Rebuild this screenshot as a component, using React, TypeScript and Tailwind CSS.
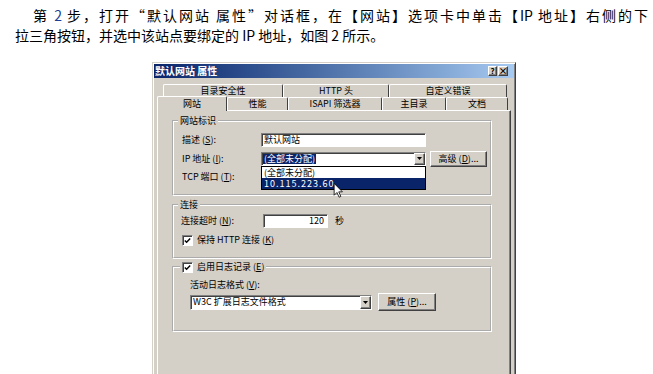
import type { ReactNode } from "react";

const sunken =
  "border border-t-[#808080] border-l-[#808080] border-b-white border-r-white shadow-[inset_1px_1px_0_#404040] bg-white";
const raised =
  "border border-t-white border-l-white border-b-[#404040] border-r-[#404040] shadow-[inset_-1px_-1px_0_#808080] bg-[#d4d0c8]";
const groove = "border-2 border-white [border-style:groove]";

function Combo({ className, children }: { className: string; children: ReactNode }) {
  return (
    <div className={`${sunken} flex items-stretch ${className}`}>
      <div className="flex flex-1 items-center overflow-hidden pl-[1px]">{children}</div>
      <div className={`${raised} flex w-[11px] items-center justify-center`}>
        <svg width="5" height="3" viewBox="0 0 5 3">
          <path d="M0 0h5L2.5 3z" fill="#000" />
        </svg>
      </div>
    </div>
  );
}

function Check() {
  return (
    <div className={`${sunken} flex h-[11px] w-[11px] shrink-0 items-center justify-center`}>
      <svg width="7" height="7" viewBox="0 0 7 7">
        <path d="M0.8 3.4 L2.6 5.2 L6.2 1.4" stroke="#000" strokeWidth="1.4" fill="none" />
      </svg>
    </div>
  );
}

function Button({ className, children }: { className: string; children: ReactNode }) {
  return (
    <div className={`${raised} flex items-center justify-center ${className}`}>{children}</div>
  );
}

const row1 = [
  { label: "目录安全性", w: "w-[120px]" },
  { label: "HTTP 头", w: "w-[106px]" },
  { label: "自定义错误", w: "w-[118px]" },
];

const row2 = [
  { label: "网站", w: "w-[70px]", selected: true },
  { label: "性能", w: "w-[61px]" },
  { label: "ISAPI 筛选器", w: "w-[94px]" },
  { label: "主目录", w: "w-[64px]" },
  { label: "文档", w: "w-[62px]" },
];

const tab =
  "flex items-center justify-center border-t border-l border-t-white border-l-white border-r border-r-[#404040] rounded-tl-[2px] rounded-tr-[2px] bg-[#d4d0c8]";

function Dialog() {
  return (
    <div className="ml-[152px] mt-[17px] h-[330px] w-[364px] border border-t-[#d4d0c8] border-l-[#d4d0c8] border-r-[#404040] border-b-[#404040] bg-[#d4d0c8] p-[1px] text-[9px] leading-[14px] shadow-[inset_1px_1px_0_#fff,inset_-1px_-1px_0_#808080]">
      {/* Title bar */}
      <div className="flex h-[14px] items-center justify-between bg-gradient-to-r from-[#0a246a] to-[#a6caf0] pl-[1px] pr-[6px]">
        <span className="text-[10px] font-bold leading-[14px] text-white">默认网站 属性</span>
        <div className="flex gap-[1px]">
          <Button className="h-[10px] w-[9px] text-[8px] font-bold leading-[8px]">?</Button>
          <Button className="h-[10px] w-[10px] text-[9px] font-bold leading-[8px]">×</Button>
        </div>
      </div>

      <div className="ml-[3px] w-[354px]">
        {/* Tabs */}
        <div className="mt-[6px] flex h-[13px] pl-[6px]">
          {row1.map((t) => (
            <div key={t.label} className={`${tab} ${t.w} h-[13px] items-start leading-[11px]`}>
              {t.label}
            </div>
          ))}
        </div>
        <div className="flex h-[13px] items-end">
          {row2.map((t) =>
            t.selected ? (
              <div key={t.label} className={`${tab} ${t.w} relative z-10 -mb-px h-[15px] leading-[12px]`}>
                {t.label}
              </div>
            ) : (
              <div key={t.label} className={`${tab} ${t.w} h-[13px] leading-[12px]`}>
                {t.label}
              </div>
            )
          )}
        </div>

        {/* Panel */}
        <div className="h-[300px] border border-t-white border-l-white border-r-[#404040] border-b-[#404040] shadow-[inset_-1px_-1px_0_#808080]">
          {/* 网站标识 */}
          <fieldset className={`${groove} ml-[14px] mt-[3px] w-[320px]`}>
            <legend className="ml-[4px] px-[2px] leading-[14px]">网站标识</legend>
            <div className="flex flex-col gap-[4px] pb-[10px] pl-[8px] pt-[5px]">
              <div className="flex h-[14px] items-center">
                <span className="w-[79px]">
                  描述 (<u>S</u>):
                </span>
                <div className={`${sunken} flex h-[14px] w-[165px] items-center pl-[2px]`}>默认网站</div>
              </div>
              <div className="flex h-[15px] items-center">
                <span className="w-[79px]">
                  IP 地址 (<u>I</u>):
                </span>
                <div className="relative">
                  <Combo className="h-[14px] w-[165px]">
                    <span className="bg-[#0a246a] px-[1px] leading-[10px] text-white">(全部未分配)</span>
                  </Combo>
                  <div className="absolute left-0 top-full z-20 w-[165px] border border-black bg-white leading-[11px]">
                    <div className="h-[11px] pl-[2px]">(全部未分配)</div>
                    <div className="h-[11px] bg-[#0a246a] pl-[2px] tracking-[1px] text-white">10.115.223.60</div>
                    <svg
                      className="absolute left-[71px] top-[16px]"
                      width="11"
                      height="15"
                      viewBox="0 0 12 19"
                    >
                      <path
                        d="M0.5 0.5 L0.5 15.5 L4 12 L6.8 18 L9 17 L6.3 11.2 L11 11.2 Z"
                        fill="#fff"
                        stroke="#000"
                        strokeWidth="1"
                      />
                    </svg>
                  </div>
                </div>
                <Button className="ml-[4px] h-[16px] w-[57px]">
                  高级 (<u>D</u>)...
                </Button>
              </div>
              <div className="flex h-[14px] items-center">
                <span className="w-[79px]">
                  TCP 端口 (<u>T</u>):
                </span>
                <div className={`${sunken} h-[14px] w-[60px]`} />
              </div>
            </div>
          </fieldset>

          {/* 连接 */}
          <fieldset className={`${groove} ml-[14px] mt-[2px] w-[320px]`}>
            <legend className="ml-[4px] px-[2px] leading-[14px]">连接</legend>
            <div className="flex flex-col gap-[6px] pb-[11px] pl-[7px] pt-[2px]">
              <div className="flex h-[14px] items-center">
                <span className="w-[82px]">
                  连接超时 (<u>N</u>):
                </span>
                <div className={`${sunken} flex h-[14px] w-[65px] items-center justify-end pr-[3px]`}>120</div>
                <span className="ml-[7px]">秒</span>
              </div>
              <div className="flex h-[12px] items-center gap-[4px] pl-[1px]">
                <Check />
                <span>
                  保持 HTTP 连接 (<u>K</u>)
                </span>
              </div>
            </div>
          </fieldset>

          {/* 启用日志记录 */}
          <fieldset className={`${groove} ml-[14px] mt-[1px] w-[320px]`}>
            <legend className="ml-[6px] px-[2px] leading-[14px]">
              <div className="flex items-center gap-[4px]">
                <Check />
                <span>
                  启用日志记录 (<u>E</u>)
                </span>
              </div>
            </legend>
            <div className="flex flex-col pb-[19px] pl-[16px] pt-[4px]">
              <div className="h-[14px]">
                活动日志格式 (<u>V</u>):
              </div>
              <div className="mt-[1px] flex h-[18px] items-center gap-[6px]">
                <Combo className="h-[15px] w-[182px]">
                  <span className="pl-[1px]">W3C 扩展日志文件格式</span>
                </Combo>
                <Button className="h-[18px] w-[58px]">
                  属性 (<u>P</u>)...
                </Button>
              </div>
            </div>
          </fieldset>
        </div>
      </div>
    </div>
  );
}

export default function App() {
  return (
    <div className="h-[374px] w-[653px] overflow-hidden bg-white font-['Noto_Sans_CJK_SC',sans-serif] text-black">
      <div className="pt-[5px] text-[14px] leading-[20px]">
        <p className="w-[648px] pl-[33px] text-justify [text-align-last:justify]">
          第 <span className="text-[#1c3f94]">2</span> 步，打开“默认网站 属性”对话框，在【网站】选项卡中单击【IP 地址】右侧的下
        </p>
        <p className="pl-[15px]">拉三角按钮，并选中该站点要绑定的 IP 地址，如图 2 所示。</p>
      </div>
      <Dialog />
    </div>
  );
}
